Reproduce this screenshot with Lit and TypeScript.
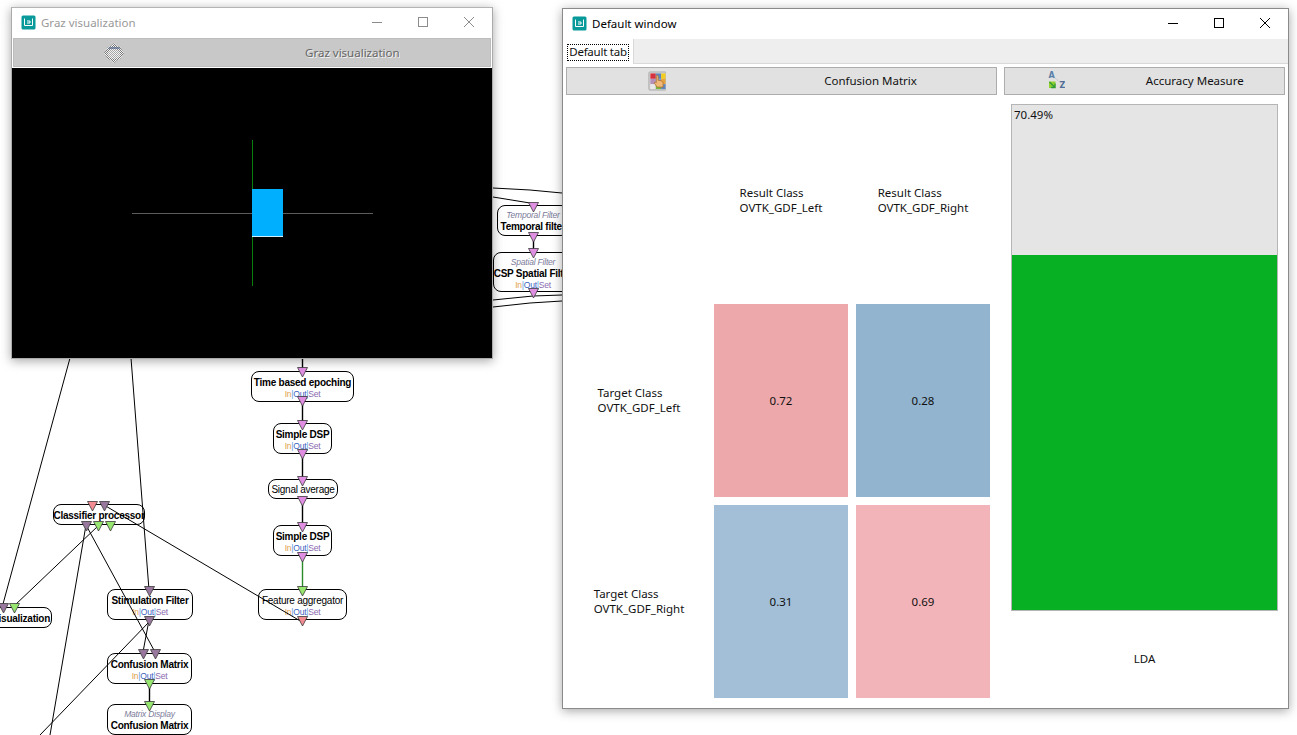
import { LitElement, html, css, svg } from 'lit';
import { customElement } from 'lit/decorators.js';

const PINK = '#e08ee2';
const MAUVE = '#98789c';
const GREEN = '#96e670';
const RED = '#f28c92';

type BoxNode = {
  x: number;
  y: number;
  w: number;
  h: number;
  title: string;
  sub?: string;
  links?: boolean;
  end?: boolean;
  plain?: boolean;
};

// scenario boxes behind the two windows
const nodes: BoxNode[] = [
  { x: 497, y: 205, w: 72, h: 31, title: 'Temporal filter', sub: 'Temporal Filter' },
  { x: 493, y: 252, w: 80, h: 40, title: 'CSP Spatial Filter', sub: 'Spatial Filter', links: true },
  { x: 251, y: 371, w: 103, h: 31, title: 'Time based epoching', links: true },
  { x: 273, y: 423, w: 59, h: 31, title: 'Simple DSP', links: true },
  { x: 268, y: 479, w: 70, h: 20, title: 'Signal average', plain: true },
  { x: 273, y: 525, w: 59, h: 31, title: 'Simple DSP', links: true },
  { x: 258, y: 589, w: 89, h: 31, title: 'Feature aggregator', links: true, plain: true },
  { x: 53, y: 504, w: 92, h: 21, title: 'Classifier processor' },
  { x: -36, y: 607, w: 88, h: 21, title: 'Visualization', end: true },
  { x: 107, y: 589, w: 86, h: 31, title: 'Stimulation Filter', links: true },
  { x: 107, y: 653, w: 85, h: 31, title: 'Confusion Matrix', links: true },
  { x: 107, y: 704, w: 85, h: 31, title: 'Confusion Matrix', sub: 'Matrix Display' },
];

const pins: [number, number, string][] = [
  [533, 202, PINK], [533, 232, PINK], [533, 248, PINK], [533, 288, PINK],
  [302, 367, PINK], [302, 396, PINK], [302, 420, PINK], [302, 449, PINK],
  [302, 476, PINK], [302, 496, PINK], [302, 522, PINK], [302, 552, PINK],
  [302, 586, GREEN], [302, 616, RED],
  [92, 501, RED], [104, 501, MAUVE], [86, 521, MAUVE], [98, 521, GREEN], [110, 521, GREEN],
  [3, 603, MAUVE], [14, 603, GREEN],
  [149, 586, MAUVE], [149, 616, MAUVE],
  [143, 649, MAUVE], [155, 649, MAUVE], [149, 679, GREEN], [149, 701, GREEN],
];

const edges: [number, number, number, number][] = [
  [70, 358, 3, 604], [131, 358, 149, 590],
  [98, 526, 14, 606], [86, 525, 50, 735], [86, 525, 155, 652], [104, 505, 302, 622],
  [149, 620, 143, 652], [149, 622, 40, 735],
  [493, 188, 530, 190], [530, 190, 562, 193], [493, 197, 530, 203],
  [493, 300, 533, 296], [533, 296, 562, 295],
  [493, 307, 530, 303], [530, 303, 562, 301],
];

// straight links between stacked boxes: x, from y, to y
const drops: [number, number, number][] = [
  [302, 355, 370], [302, 400, 424], [302, 452, 480], [302, 500, 526],
  [533, 235, 250], [149, 682, 704],
];

const matrix = [
  { label: 'OVTK_GDF_Left', cells: [{ v: '0.72', c: '#eda8ab' }, { v: '0.28', c: '#92b4cf' }] },
  { label: 'OVTK_GDF_Right', cells: [{ v: '0.31', c: '#a2bfd7' }, { v: '0.69', c: '#f3b4b9' }] },
];

const accuracy = 70.49;

@customElement('app-root')
export class AppRoot extends LitElement {
  static styles = css`
    :host {
      display: block;
      position: relative;
      width: 1297px;
      height: 735px;
      overflow: hidden;
      background: #fff;
      font-family: 'Noto Sans', 'Open Sans', sans-serif;
      font-size: 11.5px;
      color: #111;
    }
    .wires {
      position: absolute;
      left: 0;
      top: 0;
      z-index: 1;
      pointer-events: none;
    }
    .node {
      position: absolute;
      box-sizing: border-box;
      display: flex;
      flex-direction: column;
      align-items: center;
      justify-content: center;
      padding-top: 2px;
      border: 1px solid #000;
      border-radius: 8px;
      background: #fff;
      white-space: nowrap;
      font-family: 'Liberation Sans', Arial, sans-serif;
      line-height: 11px;
    }
    .node.end {
      align-items: flex-end;
      padding-right: 1px;
    }
    .node-title {
      font-size: 10px;
      font-weight: 700;
      letter-spacing: -0.25px;
      color: #000;
      line-height: 12px;
    }
    .node-title.plain {
      font-weight: 400;
    }
    .node-sub {
      font-size: 8.5px;
      font-style: italic;
      color: #7b7b9a;
      letter-spacing: -0.2px;
    }
    .links {
      font-size: 8.5px;
      line-height: 10px;
      letter-spacing: -0.25px;
      color: #5aa0e0;
    }
    .links .in { color: #e2a24c; }
    .links .out { color: #3c62c0; }
    .links .set { color: #8a6ab0; }

    .win {
      position: absolute;
      box-sizing: border-box;
      z-index: 2;
      display: flex;
      flex-direction: column;
      background: #fff;
      box-shadow: 0 2px 10px rgba(0, 0, 0, 0.35);
    }
    .graz {
      left: 11px;
      top: 7px;
      width: 482px;
      height: 352px;
      border: 1px solid #ababab;
      border-top-color: #b4b4b4;
    }
    .main {
      left: 562px;
      top: 8px;
      width: 727px;
      height: 701px;
      border: 1px solid #8a8a8a;
    }
    .titlebar {
      flex: none;
      display: flex;
      align-items: center;
      box-sizing: border-box;
      height: 30px;
      padding: 0 0 2px 9px;
      gap: 5px;
    }
    .title {
      flex: 1;
      color: #000;
    }
    .graz .title { color: #999; }
    .controls {
      display: flex;
      margin-bottom: -2px;
      height: 30px;
    }
    .ctl {
      display: block;
      width: 46px;
      height: 30px;
    }
    .toolbtn {
      box-sizing: border-box;
      display: flex;
      align-items: center;
      justify-content: space-around;
      border: 1px solid #adadad;
      background: #e1e1e1;
      color: #111;
    }
    .toolbtn span { padding-bottom: 1px; }
    .toolbtn svg { display: block; flex: none; }
    .graz .toolbtn {
      flex: none;
      height: 29px;
      margin: 0 1px;
      background: #c8c8c8;
      border-color: #bdbdbd;
      color: #666;
      text-shadow: 1px 1px 0 #f2f2f2;
    }
    .screen {
      display: block;
      flex: 1;
      margin-top: 1px;
      background: #000;
      min-height: 0;
    }
    .tabbar {
      flex: none;
      display: flex;
      height: 25px;
      background: #eee;
      border-bottom: 1px solid #d9d9d9;
      box-sizing: border-box;
    }
    .tab {
      box-sizing: border-box;
      width: 71px;
      height: 25px;
      padding: 5px 4px 3px;
      background: #fff;
      border-right: 1px solid #d9d9d9;
    }
    .tab span {
      display: block;
      height: 17px;
      line-height: 16px;
      box-sizing: border-box;
      outline: 1px dotted #000;
      outline-offset: -1px;
      text-align: center;
      white-space: nowrap;
      letter-spacing: -0.25px;
    }
    .content {
      flex: 1;
      min-height: 0;
      display: grid;
      grid-template-columns: 431px 281px;
      grid-template-rows: 28px 1fr;
      column-gap: 7px;
      padding: 3px 3px 3px;
    }
    .matrix {
      display: grid;
      grid-template-columns: 140px 134px 134px;
      grid-template-rows: 192px 193px 193px;
      gap: 8px;
      padding-top: 9px;
    }
    .head {
      display: flex;
      align-items: center;
      justify-content: center;
      line-height: 15px;
    }
    .row-head {
      padding: 0 0 2px 6px;
    }
    .cell {
      display: flex;
      align-items: center;
      justify-content: center;
    }
    .score {
      display: flex;
      flex-direction: column;
      padding: 9px 7px 0;
    }
    .bar {
      box-sizing: border-box;
      flex: none;
      height: 507px;
      display: flex;
      flex-direction: column;
      border: 1px solid #b5b5b5;
      background: #e5e5e5;
    }
    .bar-label {
      flex: 1;
      padding: 2px 2px;
      line-height: 16px;
    }
    .bar-fill {
      flex: none;
      box-sizing: border-box;
      background: #07b023;
      border-top: 1px solid #e5e5e5;
    }
    .bar-name {
      flex: 1;
      display: flex;
      align-items: center;
      justify-content: center;
      padding-top: 1px;
    }
  `;

  private appIcon() {
    return html`<svg width="15" height="15" viewBox="0 0 15 15">
      <rect x="0.5" y="0.5" width="14" height="14" rx="1.5" fill="#08999a"></rect>
      <path d="M3.5 3.5 V10.5 H11.5 M6 6 H9 V8 H6 M11.5 3.5 V10.5" fill="none" stroke="#fff" stroke-width="1"></path>
    </svg>`;
  }

  private controls(color: string) {
    return html`<div class="controls">
      <svg class="ctl" viewBox="0 0 46 30"><path d="M18 14.5 H28" stroke=${color} fill="none"></path></svg>
      <svg class="ctl" viewBox="0 0 46 30"><rect x="18.5" y="9.5" width="9" height="9" stroke=${color} fill="none"></rect></svg>
      <svg class="ctl" viewBox="0 0 46 30"><path d="M18 9 L28 19 M28 9 L18 19" stroke=${color} fill="none"></path></svg>
    </div>`;
  }

  private grazIcon() {
    return html`<svg width="20" height="22" viewBox="0 0 20 22">
      <defs>
        <pattern id="dither" width="2" height="2" patternUnits="userSpaceOnUse">
          <rect width="2" height="2" fill="#f4f4f4"></rect>
          <rect width="1" height="1" fill="#777"></rect>
          <rect x="1" y="1" width="1" height="1" fill="#777"></rect>
        </pattern>
      </defs>
      <path d="M10 1 L13 4 L16 5 L20 11 L16 17 L13 18 L10 21 L7 18 L4 17 L0 11 L4 5 L7 4 Z" fill="url(#dither)"></path>
      <path d="M5 5 H15 L16 7 H4 Z" fill="#5f7296" opacity="0.7"></path>
      <ellipse cx="10" cy="12" rx="6.5" ry="5" fill="#f3f3f3" opacity="0.4"></ellipse>
    </svg>`;
  }

  private matrixIcon() {
    return html`<svg width="20" height="20" viewBox="-2.5 -0.5 20.5 20.5">
      <rect x="0.5" y="0.5" width="17.5" height="18.5" rx="1" fill="#d8d8d8" stroke="#a9a9a9"></rect>
      <rect x="2" y="2" width="5.5" height="5.5" fill="#d8303c"></rect>
      <rect x="7.5" y="2" width="5.5" height="5.5" fill="#5c86c0"></rect>
      <rect x="13" y="2" width="4.5" height="5.5" fill="#f3cd20"></rect>
      <rect x="2" y="7.5" width="5.5" height="5.5" fill="#b48fb8"></rect>
      <rect x="7.5" y="7.5" width="5.5" height="5.5" fill="#7ca0d0"></rect>
      <rect x="13" y="7.5" width="4.5" height="5.5" fill="#e8a43c"></rect>
      <rect x="2" y="13" width="5.5" height="5" fill="#e8e8e8"></rect>
      <rect x="7.5" y="13" width="5.5" height="5" fill="#78b83c"></rect>
      <rect x="13" y="13" width="4.5" height="5" fill="#5c86c0"></rect>
      <path d="M8 5 C8 3.6 10 3.6 10 5 V9 L13 9.5 C15 10 15 11 15 13 V16 H9 L6 12 C6 10.5 7.5 11 8 11.5 Z" fill="#f2b877" stroke="#b0702f" stroke-width="0.8"></path>
    </svg>`;
  }

  private sortIcon() {
    return html`<svg width="20" height="20" viewBox="-3 0 20 20">
      <text x="0.5" y="7" font-family="DejaVu Sans" font-weight="700" font-size="8" fill="#5a7fa8">A</text>
      <path d="M7.5 7.5 L13 12" stroke="#a8b4c0" stroke-dasharray="1 1.2" fill="none"></path>
      <rect x="1" y="10.5" width="6.5" height="6.5" fill="#8fd02e"></rect>
      <path d="M1.5 11 L7 16.5 M7 12.5 V16.5 H3" stroke="#2f9a3a" stroke-width="1.3" fill="none"></path>
      <text x="11.5" y="17" font-family="DejaVu Sans" font-weight="700" font-size="8" fill="#4f6f98">Z</text>
    </svg>`;
  }

  private renderNode(n: BoxNode) {
    const classes = `node${n.end ? ' end' : ''}`;
    return html`<div class=${classes} style="left:${n.x}px;top:${n.y}px;width:${n.w}px;height:${n.h}px">
      ${n.sub ? html`<div class="node-sub">${n.sub}</div>` : ''}
      <div class="node-title ${n.plain ? 'plain' : ''}">${n.title}</div>
      ${n.links
        ? html`<div class="links"><span class="in">In</span>|<span class="out">Out</span>|<span class="set">Set</span></div>`
        : ''}
    </div>`;
  }

  private renderWires() {
    return html`<svg class="wires" width="1297" height="735" viewBox="0 0 1297 735">
      ${edges.map(([a, b, c, d]) => svg`<line x1=${a} y1=${b} x2=${c} y2=${d} stroke="#000" stroke-width="1"></line>`)}
      ${drops.map(([x, a, b]) => svg`<line x1=${x + 0.5} y1=${a} x2=${x + 0.5} y2=${b} stroke="#000" stroke-width="1.4"></line>`)}
      <line x1="302.5" y1="556" x2="302.5" y2="590" stroke="#2a8a2a" stroke-width="1.4"></line>
      ${pins.map(
        ([x, y, fill]) => svg`<path d="M${x - 4.5} ${y + 0.5} H${x + 5.5} L${x + 0.5} ${y + 10} Z" fill=${fill} stroke="#3a3a3a" stroke-width="0.8"></path>`
      )}
    </svg>`;
  }

  private renderGraz() {
    return html`<section class="win graz">
      <div class="titlebar">
        ${this.appIcon()}
        <span class="title">Graz visualization</span>
        ${this.controls('#8c8c8c')}
      </div>
      <div class="toolbtn">${this.grazIcon()}<span>Graz visualization</span></div>
      <svg class="screen" viewBox="0 0 480 290">
        <line x1="120" y1="145.5" x2="361" y2="145.5" stroke="#5c5c5c"></line>
        <line x1="240.5" y1="72" x2="240.5" y2="218" stroke="#0a7d0a"></line>
        <rect x="240" y="121" width="31" height="48" fill="#00b0ff"></rect>
        <rect x="240" y="168" width="31" height="1" fill="#cfefff"></rect>
      </svg>
    </section>`;
  }

  private renderMain() {
    return html`<section class="win main">
      <div class="titlebar">
        ${this.appIcon()}
        <span class="title">Default window</span>
        ${this.controls('#000')}
      </div>
      <div class="tabbar"><div class="tab"><span>Default tab</span></div></div>
      <div class="content">
        <div class="toolbtn">${this.matrixIcon()}<span>Confusion Matrix</span></div>
        <div class="toolbtn">${this.sortIcon()}<span>Accuracy Measure</span></div>
        <div class="matrix">
          <div></div>
          <div class="head"><div>Result Class<br />OVTK_GDF_Left</div></div>
          <div class="head"><div>Result Class<br />OVTK_GDF_Right</div></div>
          ${matrix.map(
            row => html`
              <div class="head row-head"><div>Target Class<br />${row.label}</div></div>
              ${row.cells.map(
                cell => html`<div class="cell" style="background:${cell.c}">${cell.v}</div>`
              )}
            `
          )}
        </div>
        <div class="score">
          <div class="bar">
            <div class="bar-label">${accuracy}%</div>
            <div class="bar-fill" style="height:${accuracy}%"></div>
          </div>
          <div class="bar-name">LDA</div>
        </div>
      </div>
    </section>`;
  }

  render() {
    return html`
      ${nodes.map(n => this.renderNode(n))}
      ${this.renderWires()}
      ${this.renderGraz()}
      ${this.renderMain()}
    `;
  }
}
